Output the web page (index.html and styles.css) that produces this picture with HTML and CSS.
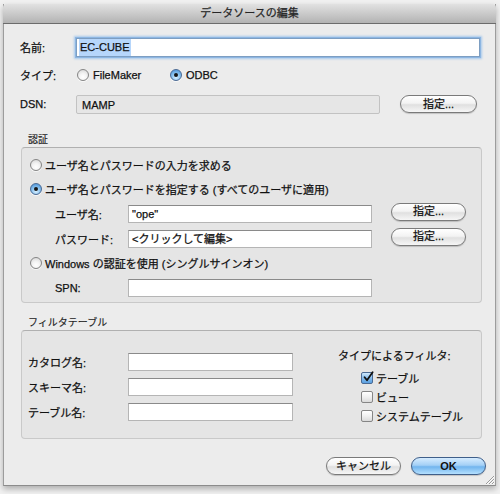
FILE: index.html
```html
<!DOCTYPE html>
<html lang="ja">
<head>
<meta charset="utf-8">
<title>データソースの編集</title>
<link rel="stylesheet" href="styles.css">
</head>
<body>
<div class="window">
  <div class="titlebar">データソースの編集</div>
  <div class="content">
    <div class="row row-name">
      <span class="label">名前:</span>
      <div class="field focus"><span class="sel">EC-CUBE</span></div>
    </div>
    <div class="row row-type">
      <span class="label">タイプ:</span>
      <span class="choice choice-first"><span class="radio"></span>FileMaker</span>
      <span class="choice"><span class="radio on"></span>ODBC</span>
    </div>
    <div class="row row-dsn">
      <span class="label">DSN:</span>
      <div class="field readonly dsn">MAMP</div>
      <button class="btn dsn-btn">指定...</button>
    </div>

    <div class="group-title">認証</div>
    <div class="group auth">
      <div class="opt"><span class="radio"></span>ユーザ名とパスワードの入力を求める</div>
      <div class="opt"><span class="radio on"></span>ユーザ名とパスワードを指定する (すべてのユーザに適用)</div>
      <div class="sub sub-user">
        <span class="sub-label">ユーザ名:</span>
        <div class="field cred">"ope"</div>
        <button class="btn cred-btn">指定...</button>
      </div>
      <div class="sub sub-pass">
        <span class="sub-label">パスワード:</span>
        <div class="field cred">&lt;クリックして編集&gt;</div>
        <button class="btn cred-btn">指定...</button>
      </div>
      <div class="opt"><span class="radio"></span>Windows の認証を使用 (シングルサインオン)</div>
      <div class="sub sub-spn">
        <span class="sub-label">SPN:</span>
        <div class="field cred"></div>
      </div>
    </div>

    <div class="group-title filter-title">フィルタテーブル</div>
    <div class="group filter">
      <div class="names">
        <div class="name-row"><span class="name-label">カタログ名:</span><div class="field short"></div></div>
        <div class="name-row"><span class="name-label">スキーマ名:</span><div class="field short"></div></div>
        <div class="name-row"><span class="name-label">テーブル名:</span><div class="field short"></div></div>
      </div>
      <div class="types">
        <div class="types-title">タイプによるフィルタ:</div>
        <div class="check-row"><span class="check on"><svg viewBox="0 0 12 12" width="12" height="12"><path d="M2.6 6.2 L5 9.2 L10.6 1.2" fill="none" stroke="#111" stroke-width="1.8" stroke-linecap="round" stroke-linejoin="round"/></svg></span>テーブル</div>
        <div class="check-row"><span class="check"></span>ビュー</div>
        <div class="check-row"><span class="check"></span>システムテーブル</div>
      </div>
    </div>

    <div class="actions">
      <button class="btn action">キャンセル</button>
      <button class="btn action default">OK</button>
    </div>
  </div>
  <svg class="grip" viewBox="0 0 11 11" width="11" height="11">
    <path d="M10 2 L2 10 M10 5 L5 10 M10 8 L8 10" stroke="#9a9a9a" stroke-width="1"/>
    <path d="M10.5 2.5 L2.5 10.5 M10.5 5.5 L5.5 10.5 M10.5 8.5 L8.5 10.5" stroke="#ffffff" stroke-width="0.8"/>
  </svg>
</div>
</body>
</html>
```

FILE: styles.css
```css
* {
  box-sizing: border-box;
}

html, body {
  margin: 0;
  padding: 0;
}

body {
  width: 500px;
  height: 494px;
  background: #f1f1f1;
  font-family: "Liberation Sans", "Noto Sans CJK JP", sans-serif;
  font-size: 11px;
  color: #111;
  -webkit-text-stroke: 0.25px #111;
  overflow: hidden;
}

/* dialog window */
.window {
  position: relative;
  margin: 4px 0 0 3px;
  width: 493px;
  height: 482px;
  background: #ececec;
  border-left: 1px solid #9c9c9c;
  border-right: 1px solid #9c9c9c;
  border-bottom: 1px solid #8c8c8c;
  box-shadow: 0 3px 6px rgba(0, 0, 0, 0.28);
}

.titlebar {
  height: 20px;
  line-height: 19px;
  text-align: center;
  color: #262626;
  -webkit-text-stroke: 0.25px #262626;
  background: linear-gradient(#e2e2e2, #c8c8c8 55%, #b3b3b3);
  border-bottom: 1px solid #6c6c6c;
  margin: 0 -1px;
  border-radius: 4px 4px 0 0;
}

.content {
  padding: 9px 0 0 16px;
}

/* top form rows */
.row {
  display: flex;
  align-items: center;
  height: 28px;
}

.row-dsn {
  height: 30px;
}

.label {
  width: 56px;
  flex: none;
}

.field {
  height: 18px;
  line-height: 17px;
  padding: 0 3px;
  background: #fff;
  border: 1px solid #b5b5b5;
  border-top-color: #8a8a8a;
  white-space: nowrap;
  overflow: hidden;
}

.field.focus {
  width: 404px;
  height: 19px;
  border-color: #7d9ec2;
  box-shadow: 0 0 0 1px #8db6e2, 0 0 2px 2px #a8c9ec;
  padding: 0 2px;
}

.sel {
  display: inline-block;
  height: 17px;
  padding: 0 1px;
  background: #b6d6fb;
}

.field.readonly {
  background: #e6e6e6;
  border: 1px solid #c2c2c2;
  border-radius: 2px;
  padding: 0 5px;
}

.dsn {
  width: 304px;
  height: 19px;
  line-height: 18px;
  margin-top: 1px;
}

.choice {
  display: inline-flex;
  align-items: center;
  padding-left: 1px;
}

.choice-first {
  width: 93px;
}

/* aqua radio */
.radio {
  display: inline-block;
  flex: none;
  width: 12px;
  height: 12px;
  margin-right: 4px;
  border-radius: 50%;
  border: 1px solid #858585;
  background: radial-gradient(circle at 50% 70%, #ffffff 0, #f4f4f4 40%, #d2d2d2 100%);
  box-shadow: 0 1px 0 rgba(255, 255, 255, 0.7);
  position: relative;
}

.radio.on {
  border-color: #4a6a94;
  background: radial-gradient(circle at 50% 75%, #d8efff 0, #8cc4f0 45%, #3c86d0 100%);
}

.radio.on::after {
  content: "";
  position: absolute;
  left: 3px;
  top: 3px;
  width: 4px;
  height: 4px;
  border-radius: 50%;
  background: #161616;
}

/* aqua push button */
.btn {
  font: inherit;
  color: #111;
  height: 18px;
  line-height: 15px;
  padding: 0;
  border: 1px solid #7a7a7a;
  border-radius: 9px;
  background: linear-gradient(#ffffff, #f3f3f3 45%, #e0e0e0 55%, #f6f6f6);
  box-shadow: 0 1px 1px rgba(0, 0, 0, 0.18);
}

.dsn-btn {
  width: 77px;
  margin-left: 20px;
}

/* group boxes */
.group-title {
  height: 13px;
  line-height: 13px;
  margin: 14px 0 1px 8px;
  font-size: 10px;
  color: #222;
  -webkit-text-stroke: 0.15px #222;
}

.filter-title {
  margin-top: 13px;
}

.group {
  margin-left: 1px;
  width: 461px;
  background: #e5e5e5;
  border: 1px solid #c9c9c9;
  border-top-color: #b0b0b0;
  border-radius: 4px;
}

.auth {
  padding: 5px 0 1px 8px;
}

.opt {
  display: flex;
  align-items: center;
  height: 24px;
}

.opt .radio {
  margin-right: 3px;
}

.sub {
  display: flex;
  align-items: center;
  height: 25px;
  padding-left: 25px;
}

.sub-spn {
  height: 26px;
}

.sub-label {
  width: 73px;
  flex: none;
}

.field.cred {
  width: 244px;
}

.cred-btn {
  width: 75px;
  margin-left: 19px;
  margin-top: -4px;
}

.filter {
  display: flex;
  height: 109px;
  padding: 18px 0 0 6px;
}

.names {
  width: 265px;
}

.name-row {
  display: flex;
  align-items: center;
  height: 25px;
}

.name-label {
  width: 100px;
  flex: none;
}

.field.short {
  width: 165px;
}

.types {
  margin-left: 45px;
  padding-top: 0;
}

.types-title {
  height: 14px;
  line-height: 14px;
  margin-bottom: 5px;
}

.check-row {
  display: flex;
  align-items: center;
  height: 19px;
  padding-left: 23px;
}

/* aqua checkbox */
.check {
  display: inline-block;
  flex: none;
  width: 12px;
  height: 12px;
  margin-right: 3px;
  border: 1px solid #858585;
  border-radius: 2px;
  background: linear-gradient(#ffffff, #f0f0f0 50%, #dadada);
  position: relative;
}

.check.on {
  border-color: #4a6a94;
  background: linear-gradient(#cfe8fc, #86bdee 50%, #5a9fe0);
}

.check svg {
  position: absolute;
  left: 0;
  top: -2px;
}

/* dialog buttons */
.actions {
  display: flex;
  justify-content: flex-end;
  gap: 10px;
  margin-top: 18px;
  padding-right: 9px;
}

.action {
  width: 75px;
  height: 18px;
}

.action.default {
  border-color: #3f5f8a;
  font-weight: bold;
  -webkit-text-stroke: 0;
  background: linear-gradient(#d6ecff, #a4d0f6 45%, #72b5ee 55%, #b4e0ff);
}

.grip {
  position: absolute;
  right: 0;
  bottom: 0;
}
```
